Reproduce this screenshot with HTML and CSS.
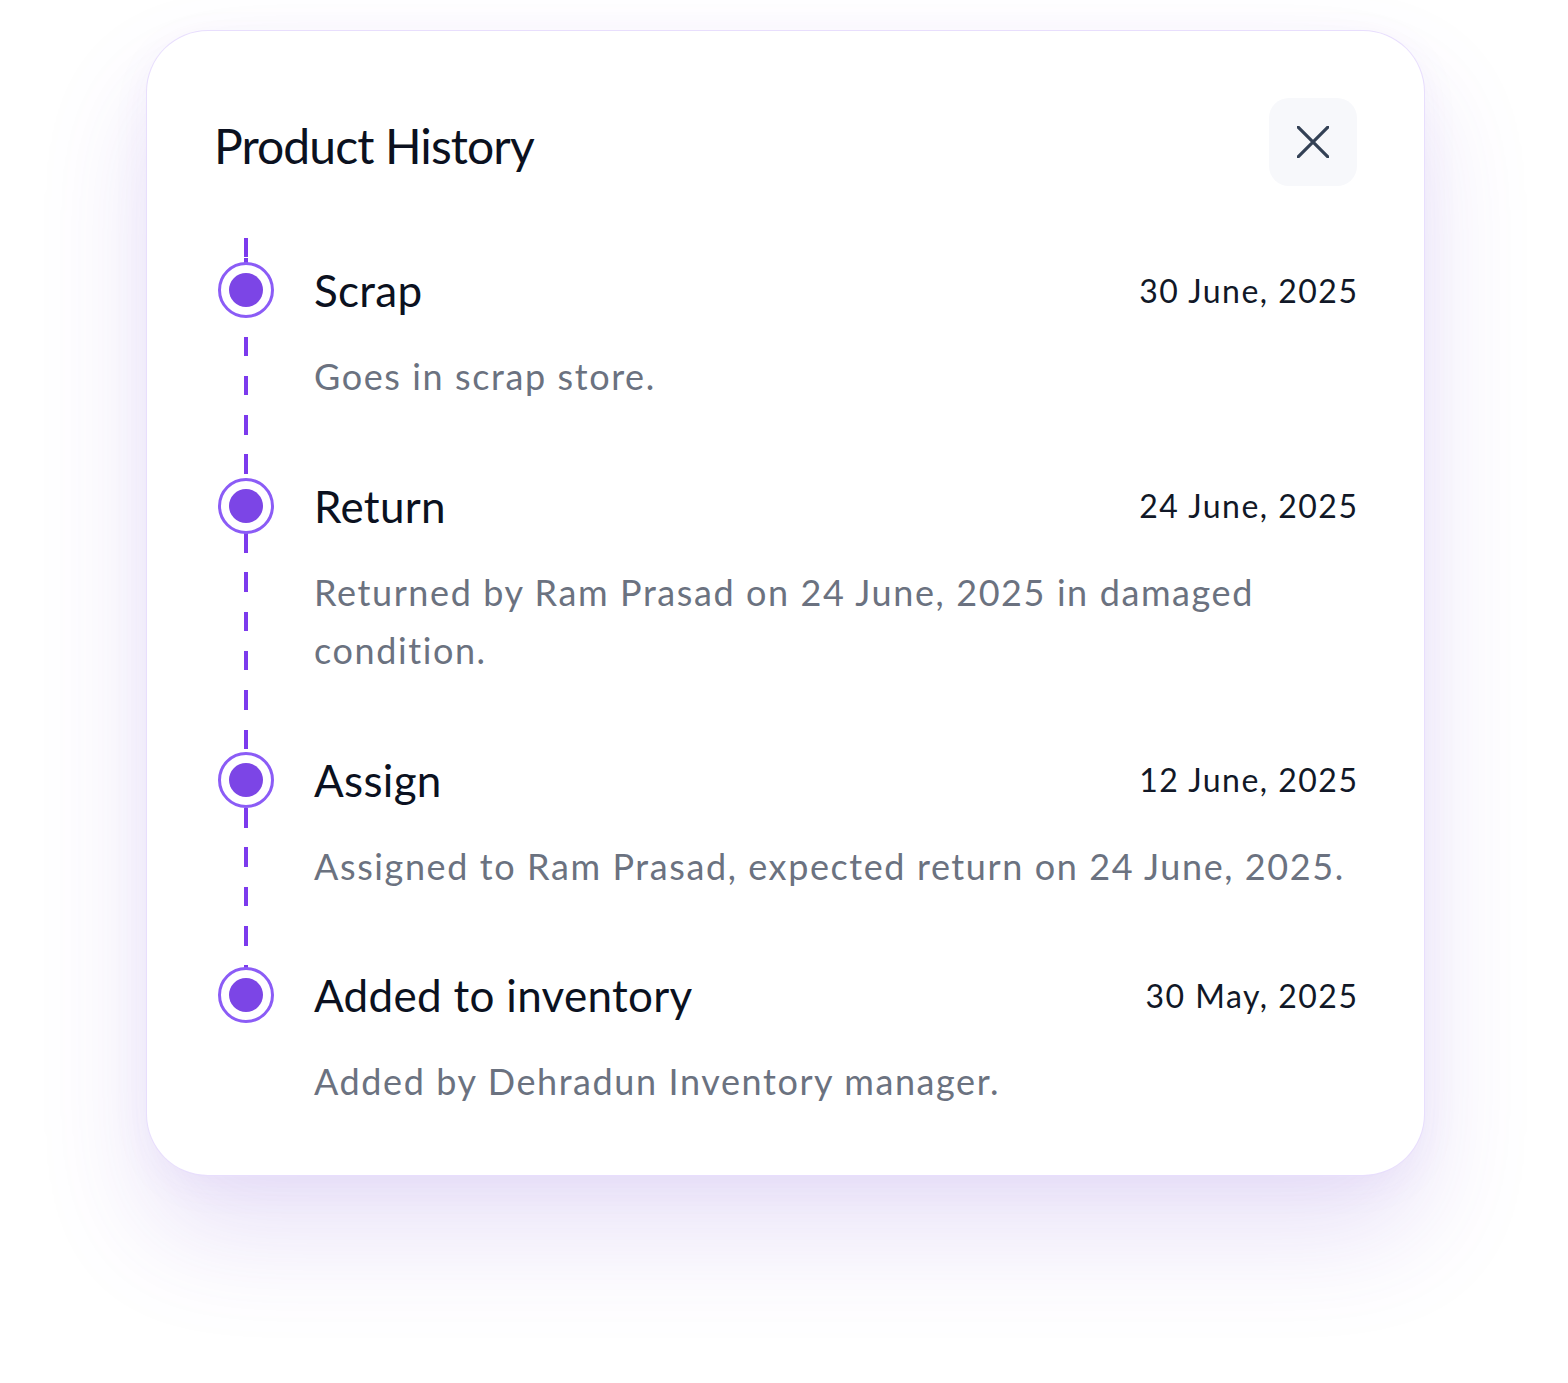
FILE: index.html
```html
<!DOCTYPE html>
<html lang="en">
<head>
<meta charset="utf-8">
<title>Product History</title>
<link rel="stylesheet" href="styles.css">
</head>
<body>
<div class="card">
  <div class="header">
    <h1 class="title">Product History</h1>
    <button class="close" aria-label="Close">
      <svg width="32" height="32" viewBox="0 0 32 32" fill="none" stroke="#334155" stroke-width="3.2" stroke-linecap="round"><path d="M1 1 L31 31 M31 1 L1 31"/></svg>
    </button>
  </div>
  <div class="timeline">
    <div class="item">
      <span class="dot"></span>
      <div class="head"><span class="name">Scrap</span><span class="date">30 June, 2025</span></div>
      <p class="desc">Goes in scrap store.</p>
    </div>
    <div class="item">
      <span class="dot"></span>
      <div class="head"><span class="name">Return</span><span class="date">24 June, 2025</span></div>
      <p class="desc">Returned by Ram Prasad on 24 June, 2025 in damaged condition.</p>
    </div>
    <div class="item">
      <span class="dot"></span>
      <div class="head"><span class="name">Assign</span><span class="date">12 June, 2025</span></div>
      <p class="desc">Assigned to Ram Prasad, expected return on 24 June, 2025.</p>
    </div>
    <div class="item">
      <span class="dot"></span>
      <div class="head"><span class="name">Added to inventory</span><span class="date">30 May, 2025</span></div>
      <p class="desc">Added by Dehradun Inventory manager.</p>
    </div>
  </div>
</div>
</body>
</html>
```
FILE: styles.css
```css
* { box-sizing: border-box; }
html, body { margin: 0; padding: 0; background: #ffffff; }
body {
  font-family: "Lato", "Noto Sans", sans-serif;
  min-height: 1383px;
  padding-top: 30px;
}
.card {
  margin-left: 146px;
  width: 1279px;
  background: #fff;
  border: 1px solid rgba(139, 92, 246, 0.2);
  border-radius: 62px;
  padding: 67px 67px 64px 67px;
  box-shadow: 0 60px 110px rgba(109, 60, 210, 0.15), 0 10px 40px rgba(109, 60, 210, 0.05);
}
.header {
  display: flex;
  justify-content: space-between;
  align-items: center;
  height: 88px;
}
.title {
  margin: 0;
  font-size: 48px;
  font-weight: 400;
  color: #0b1120;
  letter-spacing: -0.9px;
  padding-top: 6px;
}
.close {
  width: 88px;
  height: 88px;
  border: none;
  border-radius: 20px;
  background: #f7f8fb;
  display: grid;
  place-items: center;
  padding: 0;
  cursor: pointer;
}
.timeline {
  position: relative;
  margin-top: 42px;
  padding-top: 34px;
  padding-left: 4px;
}
.timeline::before {
  content: "";
  position: absolute;
  left: 30px;
  top: 0;
  bottom: 116px;
  width: 4px;
  background: repeating-linear-gradient(to bottom, #7c3aed 0, #7c3aed 19.5px, transparent 19.5px, transparent 39.3px);
  background-position: 0 30px;
}
.item {
  display: grid;
  grid-template-columns: 56px 1fr;
  column-gap: 40px;
  margin-bottom: 72px;
}
.item:last-child { margin-bottom: 0; }
.dot {
  position: relative;
  z-index: 1;
  width: 56px;
  height: 56px;
  border: 3px solid #8b5cf6;
  border-radius: 50%;
  background: #fff;
  display: grid;
  place-items: center;
}
.dot::after {
  content: "";
  width: 34px;
  height: 34px;
  border-radius: 50%;
  background: #7c45e6;
}
.head {
  height: 56px;
  display: flex;
  justify-content: space-between;
  align-items: center;
}
.name {
  font-size: 44px;
  color: #0b1120;
  font-weight: 400;
  letter-spacing: 0.3px;
}
.date {
  font-size: 32px;
  color: #111827;
  letter-spacing: 1.5px;
  margin-right: -1.5px;
}
.desc {
  grid-column: 2;
  margin: 29px 0 0 0;
  font-size: 36px;
  line-height: 58.5px;
  color: #6b7280;
  letter-spacing: 1.6px;
}
```
